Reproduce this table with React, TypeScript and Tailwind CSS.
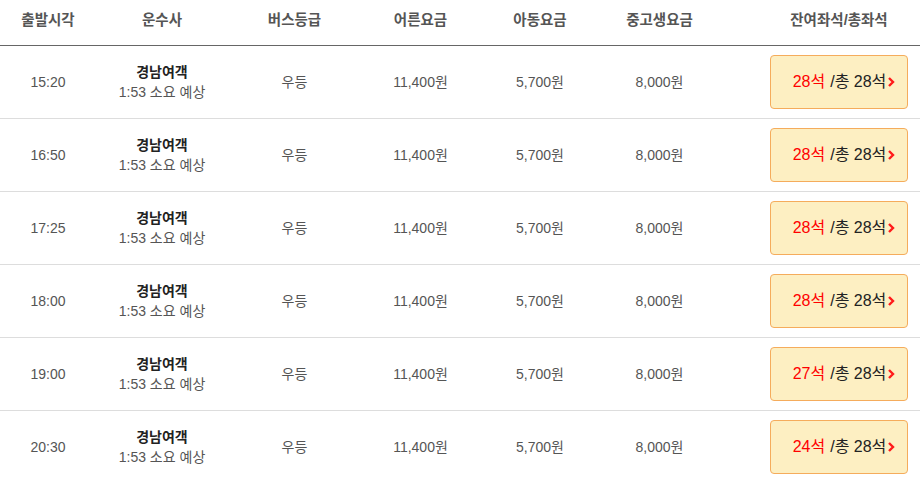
const rows = [
  { time: "15:20", left: 28 },
  { time: "16:50", left: 28 },
  { time: "17:25", left: 28 },
  { time: "18:00", left: 28 },
  { time: "19:00", left: 27 },
  { time: "20:30", left: 24 },
];

const cols = "grid grid-cols-[96px_132px_133px_119px_120px_119px_1fr]";

function Chevron() {
  return (
    <svg width="8" height="12" viewBox="0 0 8 12" className="ml-[1px]">
      <polyline points="2,2 6,6 2,10" fill="none" stroke="#ff1a1a" strokeWidth="2.4" />
    </svg>
  );
}

export default function App() {
  return (
    <div className="w-[920px] bg-white text-[14px] text-[#555] font-['Liberation_Sans','Noto_Sans_CJK_KR',sans-serif]">
      <div className={`${cols} h-[46px] items-center border-b border-[#666] font-bold text-[#555] text-[14.5px]`}>
        <div className="text-center pb-[3px]">출발시각</div>
        <div className="text-center pb-[3px]">운수사</div>
        <div className="text-center pb-[3px]">버스등급</div>
        <div className="text-center pb-[3px]">어른요금</div>
        <div className="text-center pb-[3px]">아동요금</div>
        <div className="text-center pb-[3px]">중고생요금</div>
        <div className="pl-[51px] pr-[12px] text-center pb-[3px]">잔여좌석/총좌석</div>
      </div>
      {rows.map((r) => (
        <div key={r.time} className={`${cols} h-[73px] items-center border-b border-[#ddd]`}>
          <div className="text-center">{r.time}</div>
          <div className="flex flex-col items-center leading-[20px]">
            <span className="font-bold text-[#222]">경남여객</span>
            <span>1:53 소요 예상</span>
          </div>
          <div className="text-center">우등</div>
          <div className="text-center">11,400원</div>
          <div className="text-center">5,700원</div>
          <div className="text-center">8,000원</div>
          <div className="pl-[51px] pr-[12px]">
            <button className="w-full h-[54px] flex items-center justify-center rounded-[4px] border border-[#f5ac5c] bg-[#fdefc2] text-[16px] pl-[10px]">
              <span className="text-[#ff0000]">{r.left}석</span>
              <span className="text-[#222] ml-[5px]">/총 28석</span>
              <Chevron />
            </button>
          </div>
        </div>
      ))}
    </div>
  );
}
